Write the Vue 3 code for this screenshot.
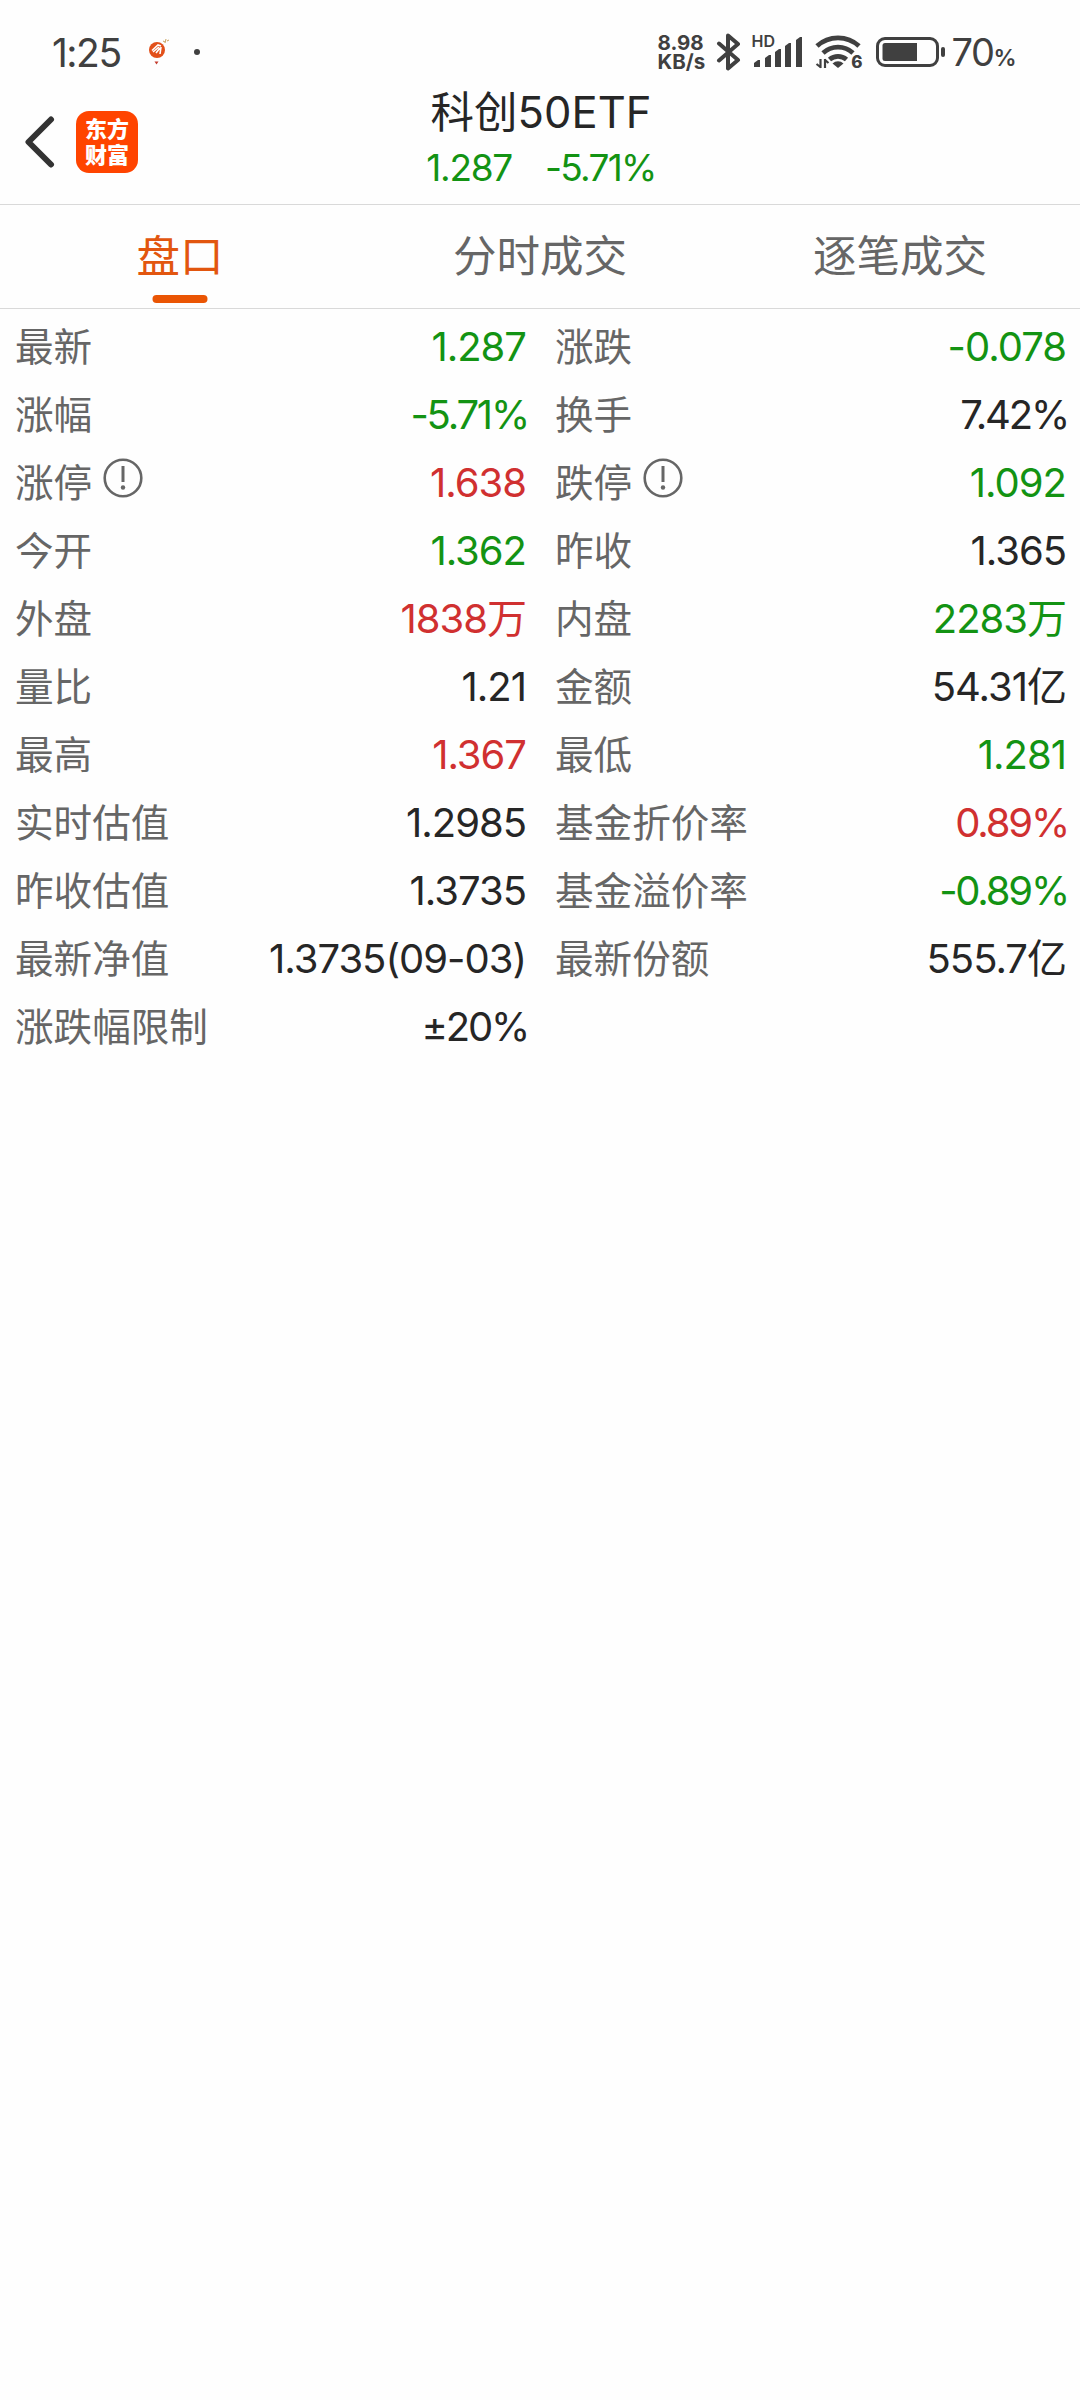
<script setup>
import { ref } from "vue"

const tabs = ["盘口", "分时成交", "逐笔成交"]
const active = ref(0)

const bars = [
    { x: 0, y: 23 },
    { x: 11, y: 18 },
    { x: 21, y: 12 },
    { x: 31, y: 6 },
    { x: 42, y: 0 }
]

const quotes = [
    { label: "最新", value: "1.287", color: "down" },
    { label: "涨跌", value: "-0.078", color: "down" },
    { label: "涨幅", value: "-5.71%", color: "down" },
    { label: "换手", value: "7.42%" },
    { label: "涨停", value: "1.638", color: "up", tip: true },
    { label: "跌停", value: "1.092", color: "down", tip: true },
    { label: "今开", value: "1.362", color: "down" },
    { label: "昨收", value: "1.365" },
    { label: "外盘", value: "1838万", color: "up" },
    { label: "内盘", value: "2283万", color: "down" },
    { label: "量比", value: "1.21" },
    { label: "金额", value: "54.31亿" },
    { label: "最高", value: "1.367", color: "up" },
    { label: "最低", value: "1.281", color: "down" },
    { label: "实时估值", value: "1.2985" },
    { label: "基金折价率", value: "0.89%", color: "up" },
    { label: "昨收估值", value: "1.3735" },
    { label: "基金溢价率", value: "-0.89%", color: "down" },
    { label: "最新净值", value: "1.3735(09-03)" },
    { label: "最新份额", value: "555.7亿" },
    { label: "涨跌幅限制", value: "±20%" }
]

// 百分比字距收紧
const isRate = (value) => value.endsWith("%")
</script>


<template>
    <div class="page">
        <div class="status">
            <span class="time">1:25</span>
            <svg class="balloon" width="22" height="28" viewBox="0 0 22 28">
                <circle cx="9" cy="12" r="8" fill="#e2501a" />
                <path d="M4 12.500L10 7l3 1M5 14l6-5M8 15l4-5M12 16l1-7" fill="none" stroke="#fff" stroke-width="1.600" />
                <path d="M6.500 23.500h4l-2 3z" fill="#c33a2c" />
                <path d="M15 3l2 1M18 1l-1 4M19 3l2-1" stroke="#c9a05a" stroke-width="1" />
            </svg>
            <i class="dot"></i>
            <div class="speed">
                <span>8.98</span>
                <span>KB/s</span>
            </div>
            <svg class="bluetooth" width="26" height="38" viewBox="0 0 26 38">
                <path d="M3 10.500L22 27 12 35.500V2.500L22 11 3 27.500" fill="none" stroke="#404040" stroke-width="4" stroke-linejoin="round" stroke-linecap="round" />
            </svg>
            <div class="signal">
                <span class="hd">HD</span>
                <svg width="48" height="30" viewBox="0 0 48 30">
                    <path v-for="b in bars" :key="b.x" :d="`M${b.x} 30V${b.y + 3}L${b.x + 4} ${b.y}H${b.x + 6}V30z`" fill="#404040" />
                </svg>
            </div>
            <div class="wifi">
                <svg width="48" height="36" viewBox="0 0 48 36">
                    <g fill="none" stroke="#404040" stroke-width="4.800">
                        <path d="M2 12A31 31 0 0 1 44 12" />
                        <path d="M8 19A22 22 0 0 1 38 19" />
                        <path d="M14.500 25.500A13 13 0 0 1 31.500 25.500" />
                    </g>
                    <path d="M17.500 29.500a8 8 0 0 1 11 0L23 34z" fill="#404040" />
                    <path d="M5.500 25v9M6 33.500l-4.500-3.500M10 34v-9M9.500 25.500l4 3.500" fill="none" stroke="#404040" stroke-width="2.200" />
                </svg>
                <span class="gen">6</span>
            </div>
            <svg class="battery" width="70" height="30" viewBox="0 0 70 30">
                <rect x="1.500" y="1.500" width="60" height="27" rx="7.500" fill="none" stroke="#404040" stroke-width="3" />
                <path d="M9 6H41V24H9a2.500 2.500 0 0 1-2.500-2.500V8.500A2.500 2.500 0 0 1 9 6z" fill="#404040" />
                <rect x="65" y="10" width="4" height="10" rx="2" fill="#404040" />
            </svg>
            <span class="percent">70<small>%</small></span>
        </div>

        <header class="header">
            <div class="left">
                <svg width="30" height="52" viewBox="0 0 30 52">
                    <path d="M26 3.500L3.500 26 26 48.500" fill="none" stroke="#333" stroke-width="6" stroke-linejoin="round" stroke-linecap="round" />
                </svg>
                <div class="logo">
                    <span>东方</span>
                    <span>财富</span>
                </div>
            </div>
            <div class="name">
                <h1>科创<b>50ETF</b></h1>
                <p><span>1.287</span><span class="rate">-5.71%</span></p>
            </div>
        </header>

        <nav class="tabs">
            <div v-for="(tab, i) in tabs" :key="tab" :class="['tab', { active: active === i }]" @click="active = i">{{ tab }}</div>
        </nav>

        <main class="quotes">
            <div v-for="q in quotes" :key="q.label" class="quote">
                <span class="label">{{ q.label }}</span>
                <svg v-if="q.tip" class="tip" width="40" height="40" viewBox="0 0 40 40">
                    <circle cx="20" cy="20" r="18.300" fill="none" stroke="#666" stroke-width="2.600" />
                    <path d="M20 8v16" stroke="#666" stroke-width="3" />
                    <circle cx="20" cy="29.500" r="2.200" fill="#666" />
                </svg>
                <span :class="['value', q.color, { rate: isRate(q.value) }]">{{ q.value }}</span>
            </div>
        </main>
    </div>
</template>

<style>
body {
    margin: 0;
    background-color: #fefefe;
}
</style>

<style scoped>
.page {
    min-height: 2400px;
    background-color: #fefefe;
    font-family: Inter, "Noto Sans CJK SC", sans-serif;
    color: #262626;
}

.status {
    display: flex;
    align-items: center;
    height: 90px;
    padding: 14px 65px 0 52px;
    box-sizing: border-box;
    color: #404040;
    line-height: 1;
}

.time {
    width: 96px;
    font-size: 39px;
    letter-spacing: -1.5px;
}

.dot {
    width: 6px;
    height: 6px;
    margin-left: 24px;
    border-radius: 50%;
    background-color: #404040;
}

.speed {
    display: flex;
    flex-direction: column;
    width: 50px;
    margin-left: auto;
    font-size: 20.5px;
    font-weight: 700;
    line-height: 19px;
}

.bluetooth {
    margin-left: 8px;
}

.signal {
    position: relative;
    display: flex;
    margin-left: 12px;
}

.hd {
    position: absolute;
    top: -4px;
    left: -2px;
    font-size: 16px;
    font-weight: 600;
}

.wifi {
    position: relative;
    display: flex;
    margin-left: 13px;
}

.gen {
    position: absolute;
    right: 0;
    bottom: -1px;
    font-size: 17px;
    font-weight: 800;
}

.battery {
    margin-left: 13px;
}

.percent {
    margin-left: 6px;
    font-size: 38px;
    letter-spacing: -1.5px;
}

.percent small {
    font-size: 23px;
    font-weight: 600;
}

.header {
    display: flex;
    height: 114px;
    border-bottom: 1px solid #d9d9d9;
}

.left {
    display: flex;
    align-items: center;
    gap: 21px;
    width: 341px;
    height: 103px;
    padding-left: 25px;
    box-sizing: border-box;
}

.logo {
    display: flex;
    flex-direction: column;
    align-items: center;
    justify-content: center;
    width: 62px;
    height: 62px;
    border-radius: 13px;
    background-color: #ff4400;
    color: white;
    font-size: 22px;
    font-weight: 900;
    line-height: 26px;
}

.name {
    width: 400px;
    text-align: center;
}

h1 {
    margin: 0;
    font-size: 43.5px;
    font-weight: 400;
    line-height: 44px;
}

h1 b {
    font-weight: 400;
}

p {
    display: flex;
    justify-content: center;
    gap: 33px;
    margin: 12px 0 0;
    font-size: 37px;
    line-height: 44px;
    letter-spacing: -1.3px;
    color: #139313;
}

.tabs {
    display: flex;
    height: 103px;
    border-bottom: 1px solid #d9d9d9;
}

.tab {
    position: relative;
    flex: 1;
    text-align: center;
    font-size: 43.5px;
    line-height: 103px;
    color: #666;
}

.tab.active {
    color: #e2560f;
}

.tab.active::after {
    content: '';
    position: absolute;
    bottom: 5px;
    left: 50%;
    width: 55px;
    height: 8px;
    border-radius: 4px;
    background-color: #ea5504;
    transform: translateX(-50%);
}

.quotes {
    display: grid;
    grid-template-columns: 1fr 1fr;
    grid-auto-rows: 68px;
    padding-top: 4px;
}

.quote {
    display: flex;
    align-items: center;
    padding: 0 14px 0 15px;
    line-height: 68px;
}

.label {
    font-size: 38.6px;
    color: #666;
}

.tip {
    margin: 0 0 10px 11px;
}

.value {
    margin-left: auto;
    font-size: 40px;
    letter-spacing: -1px;
}

.rate {
    letter-spacing: -1.7px;
}

.value.rate {
    margin-right: -2px;
    letter-spacing: -2.2px;
}

.up {
    color: #d03030;
}

.down {
    color: #139313;
}
</style>
